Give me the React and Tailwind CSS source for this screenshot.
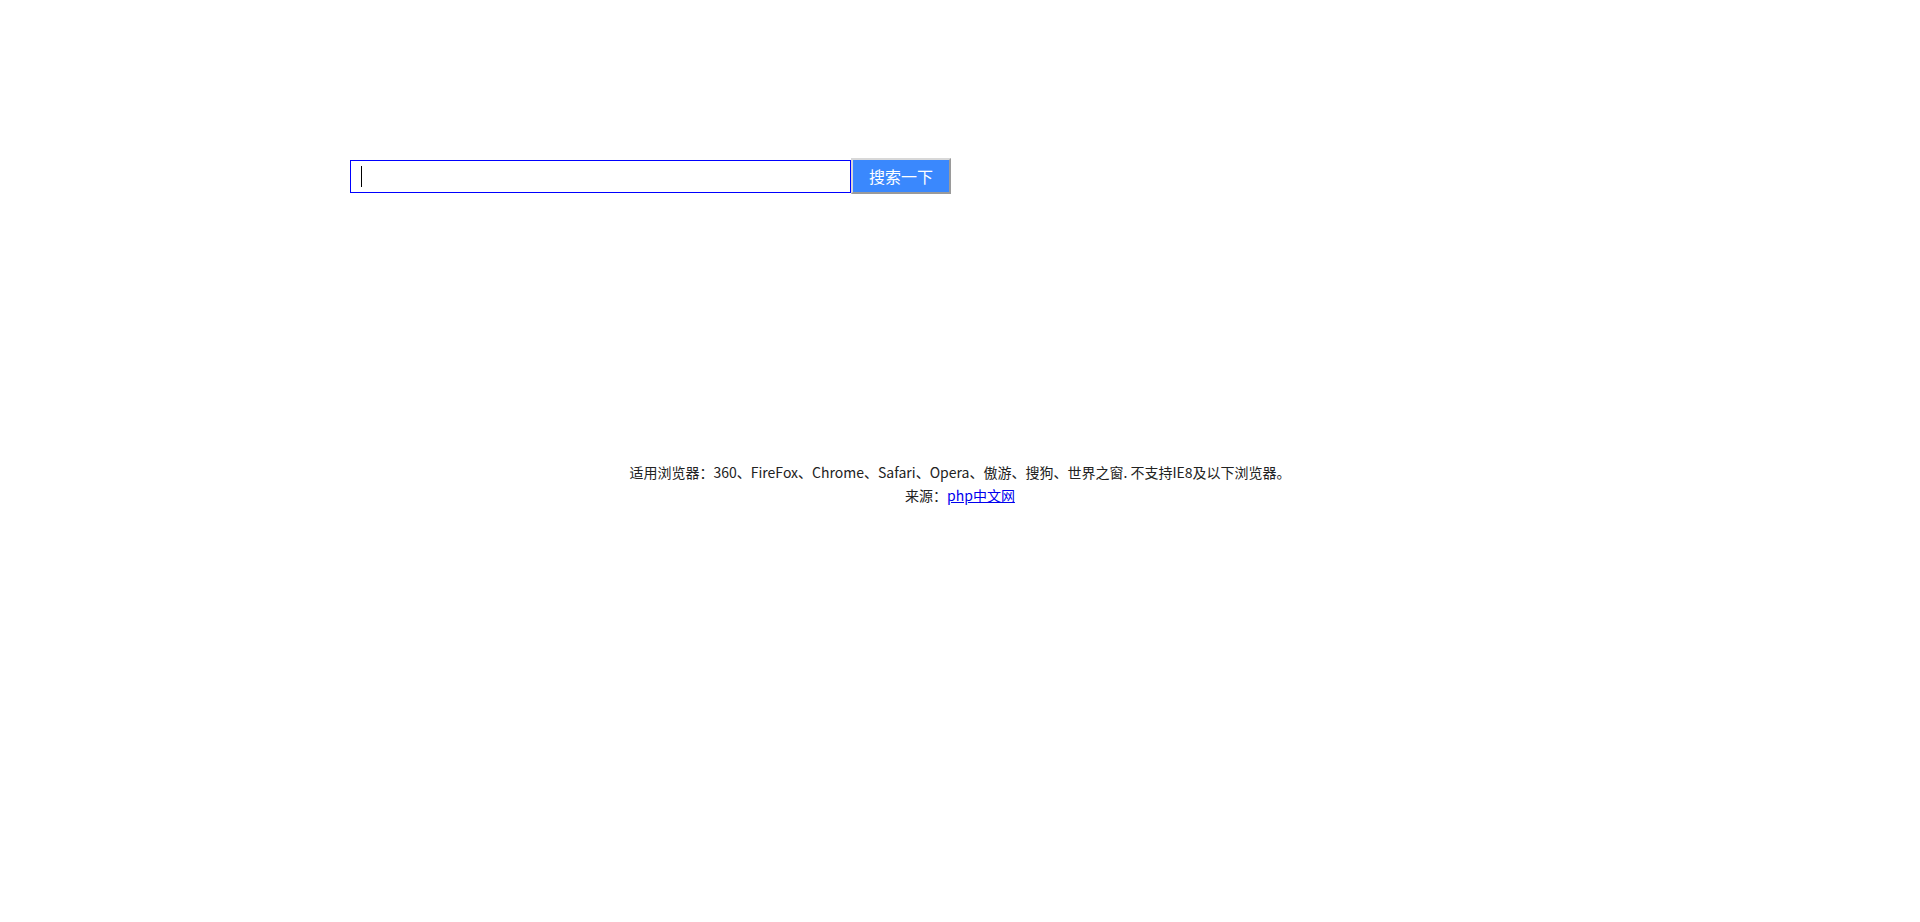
export default function App() {
  const font = { fontFamily: '"Noto Sans CJK SC", "Noto Sans", sans-serif' };
  return (
    <div className="min-h-[922px] w-full bg-white text-[#222]" style={font}>
      <div className="flex items-center pl-[350px] pt-[158px]">
        <div className="relative">
          <input
            type="text"
            className="block h-[33px] w-[501px] border border-[#0000ff] bg-white px-[10px] text-[16px] outline-none"
          />
          <span className="pointer-events-none absolute left-[11px] top-[6px] h-[21px] w-px bg-black" />
        </div>
        <button
          type="button"
          className="h-[36px] w-[100px] border-2 border-t-[#d8d8d8] border-l-[#d8d8d8] border-r-[#9a9a9a] border-b-[#9a9a9a] bg-[#3a88fd] text-[16px] leading-none text-white"
        >
          搜索一下
        </button>
      </div>
      <div className="mt-[267px] text-center text-[14px] leading-[23px]">
        <p>适用浏览器：360、FireFox、Chrome、Safari、Opera、傲游、搜狗、世界之窗. 不支持IE8及以下浏览器。</p>
        <p>
          来源：<a href="#" className="text-[#0000ee] underline">php中文网</a>
        </p>
      </div>
    </div>
  );
}
